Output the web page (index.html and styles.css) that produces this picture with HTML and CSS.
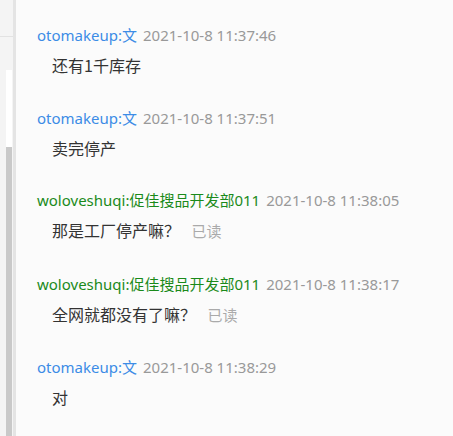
FILE: index.html
```html
<!DOCTYPE html>
<html>

<head>
    <meta name="viewport" content="width=device-width, initial-scale=1">
    <link rel="stylesheet" href="styles.css">
</head>

<body>

<div class="window">

    <div class="side">
        <div class="side-head"></div>
        <div class="side-body">
            <div class="track">
                <div class="track-top"></div>
                <div class="track-thumb"></div>
            </div>
        </div>
    </div>

    <div class="divider"></div>

    <div class="chat">

        <div class="msg">
            <div class="meta"><span class="name other">otomakeup:文</span><span class="time">2021-10-8 11:37:46</span></div>
            <div class="text">还有1千库存</div>
        </div>

        <div class="msg">
            <div class="meta"><span class="name other">otomakeup:文</span><span class="time">2021-10-8 11:37:51</span></div>
            <div class="text">卖完停产</div>
        </div>

        <div class="msg">
            <div class="meta"><span class="name me">woloveshuqi:促佳搜品开发部011</span><span class="time">2021-10-8 11:38:05</span></div>
            <div class="text">那是工厂停产嘛？ <span class="read">已读</span></div>
        </div>

        <div class="msg">
            <div class="meta"><span class="name me">woloveshuqi:促佳搜品开发部011</span><span class="time">2021-10-8 11:38:17</span></div>
            <div class="text">全网就都没有了嘛？ <span class="read">已读</span></div>
        </div>

        <div class="msg">
            <div class="meta"><span class="name other">otomakeup:文</span><span class="time">2021-10-8 11:38:29</span></div>
            <div class="text">对</div>
        </div>

    </div>

</div>

</body>
</html>
```

FILE: styles.css
```css
body {
    margin: 0;
    font-family: "Noto Sans", "Noto Sans CJK SC", sans-serif;
    background-color: #fbfbfb;
}

.window {
    display: flex;
    height: 436px;
    overflow: hidden;
}

/* left strip with the scrollbar */
.side {
    width: 13px;
    display: flex;
    flex-direction: column;
    background-color: #f4f4f4;
}

.side-head {
    height: 36px;
    border-bottom: 1px solid #e2e2e2;
}

.side-body {
    flex: 1;
    padding-left: 6px;
    display: flex;
}

.track {
    width: 6px;
    display: flex;
    flex-direction: column;
}

.track-top {
    height: 33px;
}

.track-thumb {
    flex: 1;
    background: linear-gradient(#ffffff 0, #ffffff 77px, #c9c9c9 77px);
}

.divider {
    width: 3px;
    background-color: #e4e4e4;
}

.chat {
    flex: 1;
    padding: 25px 0 0 21px;
}

.msg {
    margin-bottom: 30.5px;
}

.meta {
    font-size: 15px;
    line-height: 20px;
    white-space: nowrap;
}

.name.other {
    color: #3c8ce6;
}

.name.me {
    color: #1a8a1a;
}

.time {
    margin-left: 6px;
    color: #999999;
}

.text {
    margin-top: 8px;
    padding-left: 15px;
    font-family: "Noto Sans CJK SC", sans-serif;
    font-size: 16px;
    line-height: 24px;
    color: #333333;
}

.read {
    margin-left: 8px;
    font-size: 15px;
    color: #aaaaaa;
}
```
